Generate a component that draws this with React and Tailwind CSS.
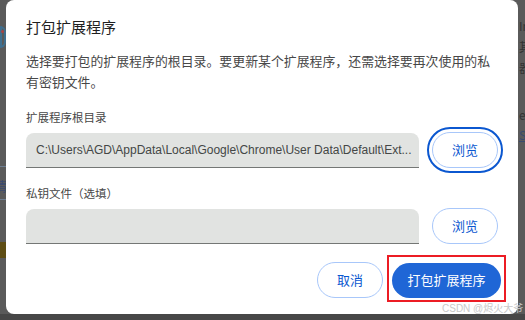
import React from 'react';

const cjk = { fontFamily: '"Noto Sans CJK SC", "Noto Sans", sans-serif' };

const Field = ({ label, value, focused }) => (
  <div className="flex flex-col">
    <div className="text-[11.5px] leading-[16px] text-[#474747] h-[16px]">{label}</div>
    <div className="flex items-center gap-[13px] mt-[7px]">
      <div
        className="flex-1 h-[35px] rounded-t-lg bg-[#e1e3e1] border-b border-[#747775] px-[10px] flex items-center text-[12px] text-[#444746] whitespace-nowrap overflow-hidden"
        style={{ fontFamily: '"Liberation Sans", Arial, sans-serif' }}
      >
        {value}
      </div>
      <button
        className={`w-[66px] h-[36px] rounded-full border border-[#a8c7fa] bg-white text-[13px] text-[#0b57d0] ${
          focused ? 'outline-2 outline-[#0b57d0] outline-offset-[3px]' : ''
        }`}
      >
        浏览
      </button>
    </div>
  </div>
);

export default function App() {
  return (
    <div className="relative w-[525px] h-[320px] bg-[#5a5a5a] overflow-hidden" style={cjk}>
      {/* page behind the overlay, barely visible at the edges */}
      <div className="absolute left-0 top-[26px] w-[6px] h-[22px] border-2 border-[#3f6f8f] rounded-r-full" />
      <div className="absolute left-[1px] top-[30px] w-[3px] h-[3px] bg-[#a44] rounded-full" />
      <div className="absolute left-0 top-[166px] w-[6px] h-px bg-[#6d7d90]" />
      <div className="absolute left-0 top-[199px] w-[6px] h-px bg-[#6d7d90]" />
      <div className="absolute left-[-6px] top-[176px] text-[13px] text-[#3a4a70]">情</div>
      <div className="absolute left-0 top-[242px] w-[6px] h-[16px] bg-[#5e4d14]" />
      <div className="absolute left-[519px] top-[18px] text-[12px] leading-[16px] text-[#333] flex flex-col gap-[5px]">
        <span>In</span>
        <span>其</span>
        <span>器</span>
      </div>
      <div className="absolute left-[519px] top-[106px] text-[12px] text-[#333]">en</div>
      <div className="absolute left-[519px] top-[126px] text-[12px] text-[#3a4a70] underline">S</div>
      <div className="absolute left-0 top-[314px] w-[525px] h-[6px] bg-[#474747]" />

      <div className="relative ml-[6px] w-[512px] h-[314px] bg-white rounded-lg px-[20px] flex flex-col">
        <div className="mt-[17px] text-[15px] leading-[20px] text-[#1f1f1f]">打包扩展程序</div>
        <div className="mt-[13px] text-[12.9px] leading-[21px] text-[#474747] -mr-[4px]">
          选择要打包的扩展程序的根目录。要更新某个扩展程序，还需选择要再次使用的私有密钥文件。
        </div>

        <div className="mt-[17px] flex flex-col gap-[17px]">
          <Field
            label="扩展程序根目录"
            value="C:\Users\AGD\AppData\Local\Google\Chrome\User Data\Default\Ext..."
            focused
          />
          <Field label="私钥文件（选填）" value="" />
        </div>

        <div className="mt-[18px] flex justify-end items-center gap-[9px] mr-[-3px]">
          <button className="w-[66px] h-[36px] rounded-full border border-[#a8c7fa] bg-white text-[13px] text-[#0b57d0]">
            取消
          </button>
          <div className="relative">
            <button className="w-[109px] h-[35px] rounded-full bg-[#1f66d6] text-[13px] text-white">
              打包扩展程序
            </button>
            <span className="absolute -left-[5px] -right-[5px] -top-[8px] -bottom-[4px] border-2 border-[#ec1c24] pointer-events-none" />
          </div>
        </div>
      </div>

      <div
        className="absolute left-[442px] top-[303px] text-[10px] leading-[12px] text-[#c9c9c9]"
        style={{ fontFamily: '"Liberation Sans", "Noto Sans CJK SC", sans-serif' }}
      >
        CSDN @烬火大爷
      </div>
    </div>
  );
}
